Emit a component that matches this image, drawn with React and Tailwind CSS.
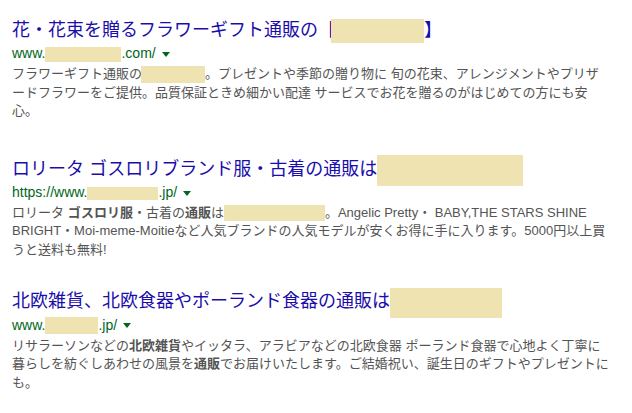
const font = { fontFamily: '"Liberation Sans", Arial, "Noto Sans CJK JP", sans-serif' }

function Box({ w, h, className = '' }) {
  return <span className={`inline-block bg-[#efe4b1] align-middle ${className}`} style={{ width: w, height: h }} />
}

function Caret() {
  return <span className="inline-block ml-[6px] align-middle border-l-[4px] border-r-[4px] border-t-[5px] border-l-transparent border-r-transparent border-t-[#006621]" />
}

function Result({ title, url, children, className = '' }) {
  return (
    <div className={className}>
      <div className="text-[18px] leading-[22px] text-[#1a0dab] whitespace-nowrap">{title}</div>
      <div className="text-[14px] leading-[24px] text-[#006621] whitespace-nowrap">
        {url}
        <Caret />
      </div>
      <div className="text-[13px] leading-[18.5px] text-[#545454] whitespace-nowrap">{children}</div>
    </div>
  )
}

export default function App() {
  return (
    <div className="w-[632px] h-[413px] bg-white pl-[12px] pt-[19px] overflow-hidden" style={font}>
      <Result
        title={<>花・花束を贈るフラワーギフト通販の【<Box w={93} h={24} className="-my-[2px] -ml-[5px]" />】</>}
        url={<>www.<Box w={76} h={15} className="-my-[2px]" />.com/</>}
      >
        フラワーギフト通販の<Box w={64} h={17} className="-my-[2px] -ml-[1px]" />。プレゼントや季節の贈り物に 旬の花束、アレンジメントやプリザ<br />
        ードフラワーをご提供。品質保証ときめ細かい配達 サービスでお花を贈るのがはじめての方にも安<br />
        心。
      </Result>

      <Result
        className="mt-[37px]"
        title={<>ロリータ ゴスロリブランド服・古着の通販は<Box w={146} h={31} className="-my-[6px]" /></>}
        url={<>https://www.<Box w={71} h={13} />.jp/</>}
      >
        ロリータ <b>ゴスロリ服</b>・古着の<b>通販</b>は<Box w={101} h={16} className="-my-[2px]" />。Angelic Pretty・ BABY,THE STARS SHINE<br />
        BRIGHT・Moi-meme-Moitieなど人気ブランドの人気モデルが安くお得に手に入ります。5000円以上買<br />
        うと送料も無料!
      </Result>

      <Result
        className="mt-[31px]"
        title={<>北欧雑貨、北欧食器やポーランド食器の通販は<Box w={112} h={30} className="-my-[5px]" /></>}
        url={<>www.<Box w={53} h={17} className="-my-[2px]" />.jp/</>}
      >
        リサラーソンなどの<b>北欧雑貨</b>やイッタラ、アラビアなどの北欧食器 ポーランド食器で心地よく丁寧に<br />
        暮らしを紡ぐしあわせの風景を<b>通販</b>でお届けいたします。ご結婚祝い、誕生日のギフトやプレゼントに<br />
        も。
      </Result>
    </div>
  )
}
